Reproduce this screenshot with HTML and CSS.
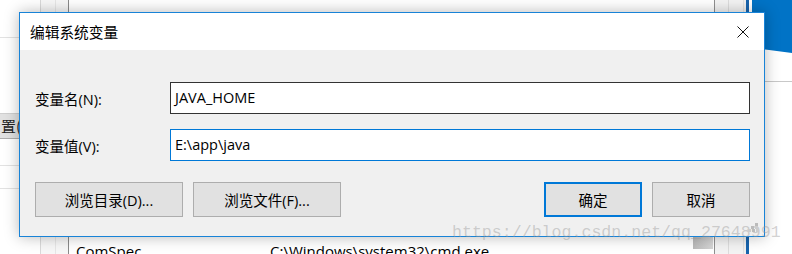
FILE: index.html
```html
<!DOCTYPE html>
<html lang="zh-CN">
<head>
    <meta charset="UTF-8">
    <title>编辑系统变量</title>
    <link rel="stylesheet" href="styles.css">
</head>
<body>
    <div class="desktop">
        <div class="bg-window">
            <div class="side">
                <div class="side-row first"></div>
                <div class="side-gap"></div>
                <div class="side-btn">置(</div>
                <div class="side-row"></div>
                <div class="side-row short"></div>
            </div>
            <div class="gutter g1"></div>
            <div class="gutter g2"></div>
            <div class="list">
                <div class="list-space"></div>
                <div class="list-row">
                    <span class="cell-name">ComSpec</span>
                    <span class="cell-value">C:\Windows\system32\cmd.exe</span>
                    <span class="thumb"></span>
                </div>
            </div>
            <div class="scroll s1"></div>
            <div class="scroll s2"></div>
            <div class="frame-edge"></div>
        </div>
        <div class="wallpaper">
            <div class="logo-pane"></div>
            <div class="wall-line"></div>
        </div>

        <div class="dialog">
            <div class="titlebar">
                <span class="title">编辑系统变量</span>
                <span class="close">
                    <svg width="12" height="12" viewBox="0 0 12 12">
                        <path d="M0.5 0.5 L11.5 11.5 M11.5 0.5 L0.5 11.5" stroke="#111" stroke-width="1" fill="none"/>
                    </svg>
                </span>
            </div>
            <div class="dialog-body">
                <div class="field">
                    <label>变量名(N):</label>
                    <div class="textbox">JAVA_HOME</div>
                </div>
                <div class="field">
                    <label>变量值(V):</label>
                    <div class="textbox focused">E:\app\java</div>
                </div>
                <div class="buttons">
                    <div class="btn-group">
                        <button class="btn wide">浏览目录(D)...</button>
                        <button class="btn wide">浏览文件(F)...</button>
                    </div>
                    <div class="btn-group">
                        <button class="btn default">确定</button>
                        <button class="btn">取消</button>
                    </div>
                </div>
            </div>
        </div>

        <div class="watermark">https://blog.csdn.net/qq_27648991<svg class="wm-dots" width="12" height="10" viewBox="0 0 12 10">
                <rect x="7" y="0" width="3" height="3" fill="#bbb"/>
                <rect x="3" y="3" width="3" height="3" fill="#bbb"/>
                <rect x="7" y="3" width="3" height="3" fill="#ccc"/>
                <rect x="0" y="6" width="3" height="3" fill="#ccc"/>
                <rect x="4" y="6" width="3" height="3" fill="#bbb"/>
                <rect x="8" y="6" width="3" height="3" fill="#ccc"/>
            </svg></div>
    </div>
</body>
</html>
```

FILE: styles.css
```css
body {
    margin: 0;
    padding: 0;
    font-family: "Open Sans", "Noto Sans CJK SC", sans-serif;
    font-size: 15px;
    color: #000;
}

.desktop {
    position: relative;
    width: 792px;
    height: 254px;
    overflow: hidden;
    background-color: #ffffff;
    display: flex;
}

/* window behind the dialog */
.bg-window {
    width: 752px;
    height: 254px;
    display: flex;
    background-color: #ffffff;
}

.side {
    width: 40px;
    display: flex;
    flex-direction: column;
}

.side-row {
    height: 26px;
    border-bottom: 1px solid #e2e2e2;
}

.side-row.first {
    height: 37px;
}

.side-row.short {
    height: 22px;
}

.side-gap {
    height: 75px;
}

.side-btn {
    height: 24px;
    background-color: #e1e1e1;
    border-top: 1px solid #cfcfcf;
    border-bottom: 1px solid #adadad;
    font-family: "Noto Sans CJK SC", sans-serif;
    font-size: 15px;
    line-height: 24px;
    text-indent: 1px;
    white-space: nowrap;
    overflow: hidden;
    color: #222;
}

.gutter {
    height: 100%;
    background-color: #f7f7f7;
}

.g1 {
    width: 14px;
    border-left: 1px solid #d9d9d9;
}

.g2 {
    width: 12px;
    border-left: 1px solid #e6e6e6;
}

.list {
    flex: 1;
    border-left: 1px solid #8a8a8a;
    display: flex;
    flex-direction: column;
}

.list-space {
    height: 240px;
}

.list-row {
    display: flex;
    align-items: flex-start;
    height: 20px;
    font-family: "Open Sans", sans-serif;
    font-size: 15px;
    line-height: 20px;
    white-space: nowrap;
}

.cell-name {
    width: 194px;
    padding-left: 7px;
    padding-top: 7px;
}

.cell-value {
    width: 423px;
    padding-top: 7px;
}

.thumb {
    width: 20px;
    height: 14px;
    margin-top: 1px;
    background: linear-gradient(to right, #b9b9b9, #d6d6d6);
}

.scroll {
    height: 100%;
    background-color: #f3f3f3;
}

.s1 {
    width: 13px;
    border-left: 1px solid #8f8f8f;
}

.s2 {
    width: 14px;
    border-left: 1px solid #dcdcdc;
}

.frame-edge {
    width: 8px;
    border-left: 1px solid #e2e2e2;
    background: linear-gradient(to right, #f0f0f0 0, #f0f0f0 2px, #1864ad 2px, #1864ad 5px, #ffffff 5px);
}

.wallpaper {
    width: 40px;
    height: 254px;
    display: flex;
    flex-direction: column;
}

.logo-pane {
    height: 53px;
    background-color: #0173c6;
    clip-path: polygon(0 0, 100% 0, 100% 100%, 0 90%);
}

.wall-line {
    margin-top: 28px;
    height: 1px;
    background-color: #c8c8c8;
}

/* dialog window */
.dialog {
    position: absolute;
    left: 19px;
    top: 12px;
    width: 746px;
    height: 225px;
    box-sizing: border-box;
    border: 1px solid #1883d7;
    background-color: #f0f0f0;
    box-shadow: 0 0 14px rgba(0, 0, 0, 0.28);
    font-family: "Open Sans", "Noto Sans CJK SC", sans-serif;
}

.titlebar {
    height: 37px;
    background-color: #ffffff;
    display: flex;
    align-items: center;
    justify-content: space-between;
    padding-left: 10px;
}

.title {
    font-family: "Noto Sans CJK SC", sans-serif;
    font-size: 14.7px;
}

.close {
    width: 42px;
    height: 37px;
    display: flex;
    align-items: center;
    justify-content: center;
}

.dialog-body {
    padding: 32px 14px 19px 15px;
}

.field {
    display: flex;
    align-items: center;
    height: 32px;
    margin-bottom: 15px;
}

.field label {
    width: 135px;
    font-size: 14.5px;
}

.textbox {
    flex: 1;
    height: 32px;
    box-sizing: border-box;
    border: 1px solid #333333;
    background-color: #ffffff;
    padding-left: 4px;
    font-size: 14.5px;
    line-height: 30px;
}

.textbox.focused {
    border-color: #0078d7;
}

.buttons {
    display: flex;
    justify-content: space-between;
    margin-top: 21px;
}

.btn-group {
    display: flex;
    gap: 10px;
}

.btn {
    width: 98px;
    height: 35px;
    box-sizing: border-box;
    border: 1px solid #adadad;
    background-color: #e1e1e1;
    font-family: "Open Sans", "Noto Sans CJK SC", sans-serif;
    font-size: 14.5px;
    color: #000;
    padding: 0;
}

.btn.wide {
    width: 148px;
}

.btn.default {
    border: 2px solid #0078d7;
}

.watermark {
    position: absolute;
    left: 452px;
    top: 224px;
    font-family: "Liberation Mono", monospace;
    font-size: 16.6px;
    line-height: 17px;
    color: rgba(150, 150, 150, 0.42);
    white-space: nowrap;
    display: flex;
    align-items: flex-start;
}

.wm-dots {
    position: absolute;
    left: 296px;
    top: -1px;
}
```
